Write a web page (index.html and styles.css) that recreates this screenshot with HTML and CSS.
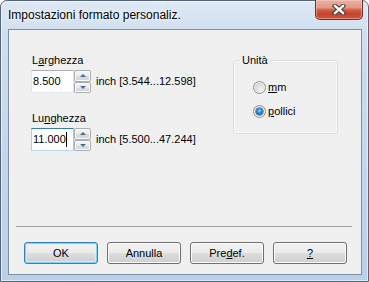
FILE: index.html
```html
<!DOCTYPE html>
<html lang="it">
<head>
<meta charset="utf-8">
<title>Impostazioni formato personaliz.</title>
<link rel="stylesheet" href="styles.css">
</head>
<body>
<div class="window">
  <div class="titlebar">
    <span class="title">Impostazioni formato personaliz.</span>
    <button class="close" aria-label="Chiudi">
      <svg width="14" height="11" viewBox="0 0 14 11">
        <path d="M3 2 L11 9 M11 2 L3 9" stroke="#3b3b3b" stroke-width="4.4" stroke-linecap="square" fill="none"/>
        <path d="M3 2 L11 9 M11 2 L3 9" stroke="#ffffff" stroke-width="2.4" stroke-linecap="square" fill="none"/>
      </svg>
    </button>
  </div>
  <div class="client">
    <div class="main">
      <div class="fields">
        <div class="lbl">L<u>a</u>rghezza</div>
        <div class="row">
          <div class="edit">8.500</div>
          <div class="spin"><span class="sb up"></span><span class="sb down"></span></div>
          <span class="range">inch [3.544...12.598]</span>
        </div>
        <div class="lbl lbl2">Lu<u>n</u>ghezza</div>
        <div class="row">
          <div class="edit focus">11.000<span class="caret"></span></div>
          <div class="spin"><span class="sb up"></span><span class="sb down"></span></div>
          <span class="range">inch [5.500...47.244]</span>
        </div>
      </div>
      <fieldset class="group">
        <legend>Unità</legend>
        <div class="radio"><span class="dot"></span><span class="rtext"><u>m</u>m</span></div>
        <div class="radio radio2"><span class="dot checked"></span><span class="rtext"><u>p</u>ollici</span></div>
      </fieldset>
    </div>
    <div class="sep"></div>
    <div class="buttons">
      <button class="btn default">OK</button>
      <button class="btn">Annulla</button>
      <button class="btn">Pre<u>d</u>ef.</button>
      <button class="btn"><u>?</u></button>
    </div>
  </div>
</div>
</body>
</html>
```
FILE: styles.css
```css
html, body {
  margin: 0;
  padding: 0;
  width: 369px;
  height: 282px;
  overflow: hidden;
  background: #ffffff;
}
body {
  font-family: "Liberation Sans", Arial, sans-serif;
  font-size: 11px;
  color: #000;
}
.window {
  box-sizing: border-box;
  width: 369px;
  height: 282px;
  border: 1px solid #56657a;
  border-radius: 7px 7px 0 0;
  background: linear-gradient(180deg, #dfe9f5 0%, #cfdeef 12%, #c2d6ec 60%, #b9d0e9 100%);
  box-shadow: inset 0 0 0 1px rgba(255, 255, 255, 0.55);
  display: flex;
  flex-direction: column;
  padding: 0 6px 6px 7px;
}
.titlebar {
  height: 28px;
  display: flex;
  align-items: flex-start;
}
.title {
  font-family: "Liberation Sans", Arial, sans-serif;
  font-size: 12px;
  line-height: 14px;
  margin-top: 7px;
  color: #000;
  text-shadow: 0 0 6px rgba(255, 255, 255, 0.95), 0 0 3px rgba(255, 255, 255, 0.9);
}
.close {
  margin: -1px -1px 0 auto;
  width: 48px;
  height: 20px;
  padding: 0;
  border: 1px solid #6a3128;
  border-top: none;
  border-radius: 0 0 5px 5px;
  background: linear-gradient(180deg, #ebb0a2 0%, #e39985 40%, #cf5e45 52%, #c4432d 75%, #d2553a 100%);
  box-shadow: inset 0 0 0 1px rgba(255, 220, 210, 0.45);
  display: flex;
  align-items: center;
  justify-content: center;
}
.close svg { display: block; }
.client {
  flex: 1;
  border: 1px solid #7f8ea3;
  background: #f0f0f0;
  display: flex;
  flex-direction: column;
}
.main {
  flex: 1;
  display: flex;
  padding: 24px 0 0 22px;
}
.fields {
  width: 202px;
  display: flex;
  flex-direction: column;
}
.lbl {
  line-height: 13px;
  height: 13px;
  padding-left: 1px;
}
.lbl2 { margin-top: 19px; }
.row {
  margin-top: 3px;
  display: flex;
  align-items: center;
  height: 23px;
}
.edit {
  box-sizing: border-box;
  width: 43px;
  height: 23px;
  background: #fff;
  border: 1px solid;
  border-color: #abadb3 #dbdfe6 #e3e9ef #e2e3ea;
  padding-left: 1px;
  line-height: 21px;
  display: flex;
  align-items: center;
}
.edit.focus {
  border-color: #3d7bad #a4c9e3 #b7d9ed #b5cfe7;
}
.caret {
  display: inline-block;
  width: 1px;
  height: 15px;
  background: #000;
}
.spin {
  width: 17px;
  height: 23px;
  display: flex;
  flex-direction: column;
}
.sb {
  box-sizing: border-box;
  flex: 1;
  border: 1px solid #a9adb4;
  border-radius: 2px;
  background: linear-gradient(180deg, #f6f6f6 0%, #eaeaea 50%, #dcdcdc 51%, #d6d6d6 100%);
  box-shadow: inset 0 0 0 1px #fbfbfb;
  position: relative;
}
.sb::after {
  content: "";
  position: absolute;
  left: 50%;
  top: 50%;
  margin-left: -3px;
  margin-top: -2px;
  border-left: 3px solid transparent;
  border-right: 3px solid transparent;
}
.up::after { border-bottom: 3px solid #4f6a8f; }
.down::after { border-top: 3px solid #4f6a8f; margin-top: -1px; }
.range {
  margin-left: 5px;
  line-height: 13px;
  white-space: nowrap;
}
.group {
  box-sizing: border-box;
  margin: 0;
  width: 105px;
  height: 80px;
  padding: 0;
  border: 1px solid #d5dfe5;
  border-radius: 3px;
  box-shadow: inset 0 0 0 1px rgba(255,255,255,0.6);
}
.group legend {
  margin-left: 6px;
  padding: 0 2px;
  line-height: 13px;
}
.radio {
  display: flex;
  align-items: center;
  height: 13px;
  margin-top: 14px;
  padding-left: 19px;
}
.radio2 { margin-top: 11px; }
.dot {
  box-sizing: border-box;
  width: 13px;
  height: 13px;
  border-radius: 50%;
  border: 1px solid #8e8f8f;
  background: radial-gradient(circle at 60% 65%, #f4f4f4 0%, #dcdcdc 45%, #cbcbcb 75%, #e6e6e6 100%);
  box-shadow: inset 0 0 0 1px #f4f4f4;
  position: relative;
  flex: none;
}
.dot.checked::after {
  content: "";
  position: absolute;
  left: 2px;
  top: 2px;
  width: 7px;
  height: 7px;
  border-radius: 50%;
  background: radial-gradient(circle at 50% 40%, #9fd7ff 0%, #2a83cc 45%, #0f4e8e 100%);
  box-shadow: 0 0 0 0.5px #1d4f86;
}
.rtext {
  margin-left: 2px;
  line-height: 13px;
}
.sep {
  height: 1px;
  background: #a0a0a0;
  margin: 0 9px 0 7px;
}
.buttons {
  display: flex;
  justify-content: space-between;
  padding: 15px 14px 10px 15px;
}
.btn {
  box-sizing: border-box;
  width: 74px;
  height: 22px;
  padding: 0;
  font-family: "Liberation Sans", Arial, sans-serif;
  font-size: 11px;
  color: #000;
  border: 1px solid #707070;
  border-radius: 3px;
  background: linear-gradient(180deg, #f2f2f2 0%, #ebebeb 48%, #dddddd 52%, #cfcfcf 100%);
  box-shadow: inset 0 0 0 1px #fbfbfb;
}
.btn.default {
  border-color: #3c7fb1;
  box-shadow: inset 0 0 0 1px #7fd3f5, inset 0 0 0 2px rgba(220, 244, 252, 0.6);
}
```
